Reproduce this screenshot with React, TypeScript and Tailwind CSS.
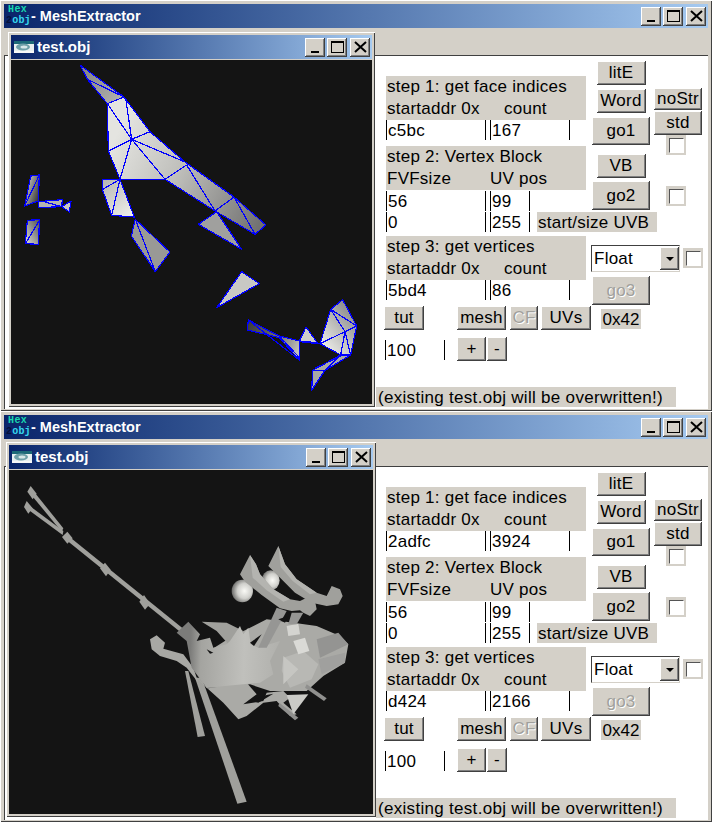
const raised =
  "bg-[#d4d0c8] shadow-[inset_-1px_-1px_0_#404040,inset_1px_1px_0_#ffffff,inset_-2px_-2px_0_#808080]";

function Btn({ label, className, disabled }: { label: string; className: string; disabled?: boolean }) {
  return (
    <div
      className={`${raised} flex items-center justify-center pb-px text-[17px] leading-none tracking-[0.25px] ${
        disabled ? "text-[#a0a09c] [text-shadow:1px_1px_0_#ffffff]" : "text-black"
      } ${className}`}
    >
      {label}
    </div>
  );
}

function Field({ value, className }: { value: string; className: string }) {
  return (
    <div className={`flex h-5 items-center border-x border-black bg-white pl-px text-[17px] leading-none tracking-[0.25px] text-black ${className}`}>
      {value}
    </div>
  );
}

function Check({ className }: { className: string }) {
  return (
    <div className={`flex h-5 w-5 items-center justify-center bg-[#d4d0c8] ${className}`}>
      <div className="h-[15px] w-[15px] border border-t-[#555] border-l-[#555] border-r-white border-b-white bg-white" />
    </div>
  );
}

function Label({ top, left, right, rightClass }: { top: string; left: string; right: string; rightClass?: string }) {
  return (
    <div className="h-11 w-[200px] bg-[#d4d0c8] text-[17px] leading-[22px] tracking-[0.25px] text-black">
      <div className="h-[22px] whitespace-nowrap pl-px">{top}</div>
      <div className="flex h-[22px] pl-px">
        <span className="w-[103px] shrink-0 whitespace-nowrap">{left}</span>
        <span className={`whitespace-nowrap ${rightClass ?? ""}`}>{right}</span>
      </div>
    </div>
  );
}

function CaptionButtons({ className }: { className: string }) {
  const box = `${raised} flex h-[19px] w-5 items-center justify-center`;
  return (
    <div className={`flex gap-[2px] ${className}`}>
      <div className={box}>
        <div className="mt-[10px] h-[2px] w-[8px] bg-black" />
      </div>
      <div className={box}>
        <div className="h-[12px] w-[13px] border border-t-2 border-black" />
      </div>
      <div className={`${box} ml-px`}>
        <svg width="13" height="12" viewBox="0 0 13 12">
          <path d="M1 1 L12 11 M12 1 L1 11" stroke="#000" strokeWidth="2" />
        </svg>
      </div>
    </div>
  );
}

function AppIcon() {
  return (
    <div className="relative h-6 w-[25px] shrink-0 font-['Liberation_Mono',monospace] text-[10px] font-bold leading-[10px]">
      <div className="pl-[2px] pt-[1px] tracking-[0.4px] text-[#19d8b0]">Hex</div>
      <div className="pl-0 pt-[1px] tracking-[0.2px] text-[#35d8f0]">
        <span className="text-[#06103a]">2</span>obj
      </div>
    </div>
  );
}

function ChildIcon() {
  return (
    <svg width="20" height="12" viewBox="0 0 20 12" className="shrink-0">
      <rect width="20" height="12" fill="#e8f0f0" />
      <rect width="20" height="3" fill="#1d6a78" />
      <ellipse cx="9" cy="6" rx="7" ry="3.5" fill="#6fa0a8" />
      <ellipse cx="10" cy="6" rx="3.5" ry="1.5" fill="#d8e8e8" />
      <rect y="10" width="20" height="2" fill="#f8f8f8" />
    </svg>
  );
}

function WireMesh() {
  const lines = [
    "292,128 342,108", "232,55 342,108", "347,112 365,235", "292,128 365,235", "420,212 365,235",
    "295,270 365,235", "330,355 365,235", "365,235 525,303", "365,235 465,355", "465,355 530,312",
    "530,312 615,450", "615,450 672,408", "672,408 735,520", "278,385 330,355", "330,355 305,463",
    "376,475 436,632", "88,342 44,435", "95,420 155,437", "88,478 46,548", "715,777 868,897",
    "808,825 868,890", "962,745 1005,812", "998,716 962,745", "1040,795 1005,812", "962,745 1040,795",
    "930,848 1005,812", "1005,812 992,882", "1005,812 1022,882", "930,848 992,882", "908,928 945,928",
    "945,928 992,882", "915,922 992,885",
  ];
  return (
    <svg viewBox="3 -3 1083 1032" className="block h-[344px] w-[361px]" shapeRendering="crispEdges">
      <defs>
        <linearGradient id="big" gradientUnits="userSpaceOnUse" x1="300" y1="260" x2="770" y2="500">
          <stop offset="0" stopColor="#e4e4e0" />
          <stop offset="0.4" stopColor="#c0c0bc" />
          <stop offset="1" stopColor="#6c6c6c" />
        </linearGradient>
        <linearGradient id="tip" gradientUnits="userSpaceOnUse" x1="210" y1="12" x2="340" y2="120">
          <stop offset="0" stopColor="#808080" />
          <stop offset="1" stopColor="#b4b4b0" />
        </linearGradient>
        <linearGradient id="lite" gradientUnits="userSpaceOnUse" x1="280" y1="360" x2="370" y2="470">
          <stop offset="0" stopColor="#b8b8b4" />
          <stop offset="1" stopColor="#f2f2ee" />
        </linearGradient>
        <linearGradient id="dark" gradientUnits="userSpaceOnUse" x1="712" y1="790" x2="868" y2="860">
          <stop offset="0" stopColor="#3c3c3c" />
          <stop offset="0.6" stopColor="#707070" />
          <stop offset="1" stopColor="#c0c0bc" />
        </linearGradient>
        <linearGradient id="blob" gradientUnits="userSpaceOnUse" x1="940" y1="850" x2="1040" y2="760">
          <stop offset="0" stopColor="#e8e8e4" />
          <stop offset="1" stopColor="#8c8c8c" />
        </linearGradient>
        <linearGradient id="sl" x1="0" y1="0" x2="1" y2="0.6">
          <stop offset="0" stopColor="#e4e4e0" />
          <stop offset="1" stopColor="#3c3c3c" />
        </linearGradient>
        <linearGradient id="sl2" x1="1" y1="0" x2="0" y2="1">
          <stop offset="0" stopColor="#505050" />
          <stop offset="1" stopColor="#dcdcd8" />
        </linearGradient>
      </defs>
      <rect x="3" y="-3" width="1083" height="1032" fill="#141414" />
      <g stroke="#0000ff" strokeWidth="3.6" strokeLinejoin="round">
        <polygon points="292,128 342,108 420,212 525,303 672,408 768,492 735,520 615,450 465,355 330,355 295,270" fill="url(#big)" />
        <polygon points="210,12 342,108 292,128 232,55" fill="url(#tip)" />
        <polygon points="278,356 330,355 373,468 305,463 278,388" fill="url(#lite)" />
        <polygon points="376,475 480,573 436,632 364,525" fill="#999996" />
        <polygon points="620,452 695,565 565,490" fill="#a0a09e" />
        <polygon points="695,632 748,668 620,740" fill="#c8c8c4" />
        <polygon points="62,345 88,342 85,420 44,435" fill="url(#sl)" />
        <polygon points="85,422 157,416 155,437 85,440" fill="#b4b4b0" />
        <polygon points="155,437 183,420 178,453" fill="#c8c8c4" />
        <polygon points="52,478 88,476 86,550 46,548" fill="url(#sl2)" />
        <polygon points="715,777 808,825 868,840 868,897 808,830 712,807" fill="url(#dark)" />
        <polygon points="868,840 888,798 922,845" fill="#cfcfcb" />
        <polygon points="962,745 998,716 1040,795 1022,882 992,882 930,848" fill="url(#blob)" />
        <polygon points="992,882 1022,882 945,928 905,988 908,928" fill="#a8a8a6" />
        <polyline points="868,841 930,848" fill="none" strokeWidth="5" />
        <polyline points="330,355 465,355" fill="none" strokeWidth="5" />
        {lines.map((p) => (
          <polyline key={p} points={p} fill="none" />
        ))}
      </g>
    </svg>
  );
}

function SolidMesh() {
  const rod = "#a0a09c";
  return (
    <svg viewBox="-3 -3 1092 1032" className="block h-[344px] w-[364px]">
      <defs>
        <radialGradient id="ball" cx="0.6" cy="0.5" r="0.6">
          <stop offset="0" stopColor="#fafaf6" />
          <stop offset="0.55" stopColor="#d0d0cc" />
          <stop offset="1" stopColor="#6a6a68" />
        </radialGradient>
        <linearGradient id="hand" gradientUnits="userSpaceOnUse" x1="120" y1="320" x2="390" y2="330">
          <stop offset="0" stopColor="#7c7c7a" />
          <stop offset="0.12" stopColor="#a4a4a0" />
          <stop offset="0.6" stopColor="#c0c0bc" />
          <stop offset="1" stopColor="#b0b0ac" />
        </linearGradient>
      </defs>
      <rect x="-3" y="-3" width="1092" height="1032" fill="#141414" />
      <g fill={rod}>
        <polygon points="72,62 160,172 155,182 64,72" />
        <polygon points="58,104 160,180 158,192 52,114" />
        <polygon points="178,197 518,472 510,482 168,206" />
        <polygon points="62,45 80,68 68,85 52,62" />
        <polygon points="50,90 68,112 55,128 42,108" />
        <polygon points="172,182 188,202 172,218 156,198" />
        <polygon points="285,275 302,296 288,316 270,292" />
        <polygon points="402,372 420,398 405,416 388,392" />
        <polygon points="525,600 535,600 585,795 563,798" />
        <polygon points="555,620 575,620 710,992 682,998" />
        <ellipse cx="697" cy="360" rx="32" ry="34" fill="url(#ball)" />
        <ellipse cx="782" cy="328" rx="27" ry="30" fill="url(#ball)" />
      </g>
      <g transform="translate(420 240)">
        {/* back mass */}
        <polygon points="240,260 350,205 430,215 500,225 570,255 595,280 585,335 520,375 470,420 430,420 360,420 300,400 220,410 170,410 130,330" fill="#aaaaa6" />
        <polygon points="500,265 565,245 595,280 510,320" fill="#949492" />
        <polygon points="505,325 585,305 585,335 515,370" fill="#a0a09e" />
        <polygon points="400,320 460,300 505,340 485,385 420,410 395,360" fill="#b8b8b4" />
        <polygon points="400,315 445,355 400,400" fill="#c6c6c2" />
        <polygon points="410,225 445,218 450,250 415,255" fill="#d4d4d0" />
        <polygon points="430,270 465,260 478,300 445,310" fill="#dadad6" />
        {/* lower sweep */}
        <polygon points="130,370 175,412 290,395 320,430 280,460 340,450 350,425 400,420 420,440 400,455 440,490 420,495 380,450 340,455 290,495 265,505 220,455 170,410" fill="#aaaaa6" />
        <polygon points="410,432 475,430 430,490" fill="#cbcbc7" />
        <polygon points="388,455 445,500 435,508 385,465" fill="#90908e" />
        <polygon points="470,400 530,442 522,450 465,410" fill="#90908e" />
        {/* hook */}
        <polygon points="0,265 20,253 45,275 40,293 100,310 130,350 145,395 110,350 80,330 30,315 5,295" fill="#a8a8a4" />
        {/* hand */}
        <polygon points="155,212 230,215 280,240 240,285 200,240" fill="#a0a09c" />
        <polygon points="80,245 115,212 150,250 140,270 180,260 190,290 230,280 240,270 270,225 280,250 295,230 302,280 325,290 390,270 360,330 370,370 330,395 170,410 125,350 110,270" fill="url(#hand)" />
        {/* arches */}
        <polygon points="300,12 318,40 330,70 370,115 420,145 450,150 470,140 495,150 500,175 480,195 460,185 450,178 425,180 390,172 335,132 285,92 270,70" fill="#a0a09c" />
        <polygon points="300,12 318,40 330,70 370,115 420,145 400,152 350,118 308,80" fill="#b4b4b0" />
        <polygon points="385,-15 405,40 440,85 500,125 530,135 545,105 570,115 578,135 565,160 530,165 485,155 435,125 385,75 355,45" fill="#a0a09c" />
        <polygon points="385,-15 405,40 440,85 500,125 480,130 428,90 392,48" fill="#b4b4b0" />
        <polygon points="380,170 410,180 350,290 325,290" fill="#969694" />
        <polygon points="425,185 460,185 440,220 415,220" fill="#969694" />
        {/* holes */}
        <g fill="#141414">
          <polygon points="300,275 335,250 312,285" />
          <polygon points="300,450 350,432 370,428 325,455" />
          <polygon points="170,295 190,305 180,308" />
          <polygon points="385,205 415,195 405,215" />
        </g>
      </g>
    </svg>
  );
}

type WinData = {
  hi: string; hc: string; vo: string; vc: string;
  childClass: string; mesh: React.ReactNode;
};

function Window({ d }: { d: WinData }) {
  return (
    <div className="flex h-[411px] w-[712px] flex-col bg-[#d4d0c8] px-1 pt-1 shadow-[inset_1px_1px_0_#ffffff,inset_-1px_-1px_0_#404040]">
      {/* main title */}
      <div className="flex h-6 shrink-0 items-center bg-gradient-to-r from-[#0a246a] to-[#a6caf0] pl-[2px]">
        <AppIcon />
        <span className="pt-px whitespace-nowrap font-['Liberation_Sans',sans-serif] text-[14.5px] font-bold text-white">
          - MeshExtractor
        </span>
        <CaptionButtons className="ml-auto mr-[2px]" />
      </div>

      <div className="h-[27px] shrink-0 bg-[#d4d0c8]" />

      {/* client */}
      <div className="relative h-[354px] border-l border-t border-[#404040] bg-white pl-[371px] pt-[5px] font-['Liberation_Sans',sans-serif]">
        {/* mdi child */}
        <div className={`absolute flex flex-col bg-[#d4d0c8] p-[3px] shadow-[inset_1px_1px_0_#ffffff,inset_-1px_-1px_0_#404040] ${d.childClass}`}>
          <div className="flex h-6 items-center bg-gradient-to-r from-[#0a246a] to-[#a6caf0] pl-[3px]">
            <ChildIcon />
            <span className="ml-[3px] text-[15px] font-bold text-white">test.obj</span>
            <CaptionButtons className="ml-auto mr-[2px]" />
          </div>
          <div className="mt-px">{d.mesh}</div>
        </div>

        <div className="flex h-[151px]">
          <div className="ml-[10px] w-[206px] pt-[15px]">
            <Label top="step 1: get face indices" left="startaddr 0x" right="count" rightClass="pl-[14px]" />
            <div className="flex gap-1">
              <Field value={d.hi} className="w-[100px]" />
              <Field value={d.hc} className="w-[80px]" />
            </div>
            <div className="mt-[6px]">
              <Label top="step 2: Vertex Block" left="FVFsize" right="UV pos" />
            </div>
            <div className="mt-px flex gap-1">
              <Field value="56" className="w-[100px]" />
              <Field value="99" className="w-10" />
            </div>
          </div>
          <div className="flex w-[58px] flex-col items-center">
            <Btn label="litE" className="h-6 w-[49px]" />
            <Btn label="Word" className="mt-1 h-6 w-[49px]" />
            <Btn label="go1" className="mt-1 h-7 w-[58px]" />
            <Btn label="VB" className="mt-[9px] h-6 w-[49px]" />
            <Btn label="go2" className="mt-[3px] h-[29px] w-[58px]" />
          </div>
          <div className="ml-1 flex w-[48px] flex-col pt-[27px]">
            <Btn label="noStr" className="h-[22px] w-[48px]" />
            <Btn label="std" className="mt-px h-6 w-[48px]" />
            <Check className="ml-3" />
            <Check className="ml-3 mt-[31px]" />
          </div>
        </div>

        <div className="ml-[10px] flex h-5">
          <Field value="0" className="w-[100px]" />
          <Field value="255" className="ml-1 w-10" />
          <div className="ml-[7px] flex w-[120px] items-center whitespace-nowrap bg-[#d4d0c8] pl-px text-[17px] leading-none tracking-[0.25px] text-black">
            start/size UVB
          </div>
        </div>

        <div className="mt-1 flex h-[69px]">
          <div className="ml-[10px] w-[205px]">
            <Label top="step 3: get vertices" left="startaddr 0x" right="count" rightClass="pl-[14px]" />
            <div className="flex gap-1">
              <Field value={d.vo} className="w-[100px]" />
              <Field value={d.vc} className="w-[80px]" />
            </div>
          </div>
          <div className="pt-[9px]">
            <div className="flex">
              <div className="flex h-[27px] w-[89px] items-center border border-t-[#404040] border-l-[#404040] border-r-[#d4d0c8] border-b-[#d4d0c8] bg-white pl-[2px] text-[17px] leading-none tracking-[0.25px] text-black">
                <span>Float</span>
                <div className={`${raised} ml-auto flex h-[23px] w-[19px] items-center justify-center`}>
                  <div className="h-0 w-0 border-x-[4px] border-t-[4px] border-x-transparent border-t-black" />
                </div>
              </div>
              <Check className="ml-[3px] mt-[3px]" />
            </div>
            <Btn label="go3" disabled className="ml-px mt-1 h-[29px] w-[58px]" />
          </div>
        </div>

        <div className="mt-px flex h-6">
          <Btn label="tut" className="ml-2 h-6 w-10" />
          <Btn label="mesh" className="ml-[33px] h-6 w-[49px]" />
          <Btn label="CF" disabled className="ml-1 h-6 w-7" />
          <Btn label="UVs" className="ml-[3px] h-6 w-[50px]" />
          <div className="ml-[10px] mt-[3px] flex h-5 w-10 items-center justify-center bg-[#d4d0c8] text-[17px] leading-none text-black">
            0x42
          </div>
        </div>

        <div className="mt-[7px] flex h-6">
          <Field value="100" className="ml-[9px] mt-[3px] w-[60px]" />
          <Btn label="+" className="ml-3 h-6 w-[29px]" />
          <Btn label="-" className="ml-px h-6 w-5" />
        </div>

        <div className="mt-[26px] flex h-5 w-[300px] items-center whitespace-nowrap bg-[#d4d0c8] pl-[2px] text-[17px] leading-none tracking-[0.3px] text-black">
          (existing test.obj will be overwritten!)
        </div>
      </div>
    </div>
  );
}

export default function App() {
  return (
    <div className="h-[822px] w-[712px] overflow-hidden bg-[#d4d0c8]">
      <Window
        d={{
          hi: "c5bc", hc: "167", vo: "5bd4", vc: "86",
          childClass: "left-[3px] top-[-24px] w-[367px]",
          mesh: <WireMesh />,
        }}
      />
      <Window
        d={{
          hi: "2adfc", hc: "3924", vo: "d424", vc: "2166",
          childClass: "left-[1px] top-[-25px] w-[370px]",
          mesh: <SolidMesh />,
        }}
      />
    </div>
  );
}
